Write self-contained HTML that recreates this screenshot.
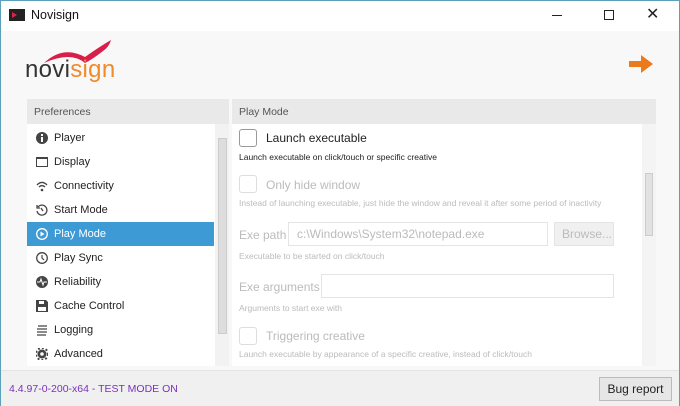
<!DOCTYPE html>
<html><head><style>
*{box-sizing:border-box;margin:0;padding:0}
body{width:680px;height:406px;overflow:hidden;font-family:"Liberation Sans",sans-serif;background:#f8f8f8;position:relative;border:1px solid #5aa0b8}
.abs{position:absolute}
.title{left:0;top:0;width:678px;height:30px;background:#fff}
.nav div.item{position:absolute;left:0;width:187px;height:24px;font-size:11px;color:#222;line-height:24px;padding-left:27px}
.nav svg{position:absolute;left:9px;top:6px}
.sel{background:#3d9ad5;color:#fff!important}
.gray{color:#bbb}
.small{font-size:8.5px}
.cb{width:18px;height:18px;border:1px solid #999;border-radius:3px;background:#fff}
.cb.d{border-color:#ddd}
.inp{border:1px solid #e4e4e4;background:#fff;height:24px}
</style></head><body>
<div class="abs title">
<svg class="abs" style="left:8px;top:8px" width="16" height="12"><rect width="16" height="12" fill="#222"/><path d="M3 3l5 3-5 3z" fill="#e0204a"/></svg>
<div class="abs" style="left:30px;top:7px;font-size:12.5px;color:#111">Novisign</div>
<div class="abs" style="left:551px;top:14px;width:10px;height:1px;background:#222"></div>
<div class="abs" style="left:603px;top:9px;width:10px;height:10px;border:1px solid #222"></div>
<div class="abs" style="left:645px;top:3px;font-size:16px;color:#222">✕</div>
</div>
<svg class="abs" style="left:40px;top:38px" width="72" height="26"><path d="M3 24 Q22 6 44 18 Q58 8 70 1 Q68 8 62 12 Q52 20 44 24 Q30 12 3 24z" fill="#d81e4b"/></svg>
<div class="abs" style="left:24px;top:55px;font-size:24px;letter-spacing:0.3px"><span style="color:#333">novi</span><span style="color:#f08a2a">sign</span></div>
<svg class="abs" style="left:628px;top:54px" width="24" height="18"><path d="M0 6h12V0l12 9-12 9v-6H0z" fill="#ec7a1c"/></svg>
<div class="abs" style="left:26px;top:98px;width:202px;height:25px;background:#e9e9e9;font-size:10.5px;color:#555;line-height:26px;padding-left:7px">Preferences</div>
<div class="abs" style="left:231px;top:98px;width:424px;height:25px;background:#e9e9e9;font-size:10.5px;color:#555;line-height:26px;padding-left:7px">Play Mode</div>
<div class="abs nav" style="left:26px;top:123px;width:202px;height:242px;background:#fff">
<div class="item" style="top:2px"><svg width="12" height="12"><circle cx="6" cy="6" r="6" fill="#444"/><rect x="5" y="5" width="2" height="5" fill="#fff"/><rect x="5" y="2" width="2" height="2" fill="#fff"/></svg>Player</div>
<div class="item" style="top:26px"><svg width="12" height="12"><rect x="0.5" y="1.5" width="11" height="9" fill="none" stroke="#444"/><rect x="0" y="1" width="12" height="2" fill="#444"/></svg>Display</div>
<div class="item" style="top:50px"><svg width="12" height="12"><path d="M1 5Q6 0 11 5M3 7Q6 4 9 7" fill="none" stroke="#444" stroke-width="1.3"/><circle cx="6" cy="10" r="1.3" fill="#444"/></svg>Connectivity</div>
<div class="item" style="top:74px"><svg width="12" height="12"><path d="M2 3A5 5 0 1 1 1 7M1 1v3h3M5 4l2 3" fill="none" stroke="#444" stroke-width="1.3"/></svg>Start Mode</div>
<div class="item sel" style="top:98px"><svg width="12" height="12"><circle cx="6" cy="6" r="5.3" fill="none" stroke="#fff" stroke-width="1.3"/><path d="M4.5 3.5l4 2.5-4 2.5z" fill="#fff"/></svg>Play Mode</div>
<div class="item" style="top:122px"><svg width="12" height="12"><circle cx="6" cy="6" r="5.3" fill="none" stroke="#444" stroke-width="1.3"/><path d="M6 3v3l2 2" fill="none" stroke="#444" stroke-width="1.2"/></svg>Play Sync</div>
<div class="item" style="top:146px"><svg width="12" height="12"><circle cx="6" cy="6" r="6" fill="#444"/><path d="M1 6h3l1-3 2 6 1-3h3" fill="none" stroke="#fff"/></svg>Reliability</div>
<div class="item" style="top:170px"><svg width="12" height="12"><path d="M0 0h10l2 2v10H0z" fill="#444"/><rect x="3" y="1" width="5" height="3" fill="#fff"/><rect x="2" y="7" width="8" height="4" fill="#fff"/></svg>Cache Control</div>
<div class="item" style="top:194px"><svg width="12" height="12"><path d="M2 2h9M1 5h10M1 8h10M1 11h9" stroke="#444" stroke-width="1.3"/></svg>Logging</div>
<div class="item" style="top:218px"><svg width="12" height="12"><circle cx="6" cy="6" r="4.5" fill="#444"/><circle cx="6" cy="6" r="6" fill="none" stroke="#444" stroke-width="2" stroke-dasharray="2 2"/><circle cx="6" cy="6" r="1.8" fill="#fff"/></svg>Advanced</div>
<div class="abs" style="left:188px;top:0;width:14px;height:242px;background:#f2f2f2"></div>
<div class="abs" style="left:191px;top:14px;width:9px;height:196px;background:#ddd;border:1px solid #ccc"></div>
</div>
<div class="abs" style="left:231px;top:123px;width:424px;height:242px;background:#fff;overflow:hidden">
<div class="abs cb" style="left:7px;top:5px"></div>
<div class="abs" style="left:34px;top:7px;font-size:12px;color:#222">Launch executable</div>
<div class="abs small" style="left:7px;top:28px;color:#222">Launch executable on click/touch or specific creative</div>
<div class="abs cb d" style="left:7px;top:51px"></div>
<div class="abs gray" style="left:34px;top:54px;font-size:12px">Only hide window</div>
<div class="abs small gray" style="left:7px;top:74px">Instead of launching executable, just hide the window and reveal it after some period of inactivity</div>
<div class="abs gray" style="left:7px;top:104px;font-size:12px">Exe path</div>
<div class="abs inp gray" style="left:56px;top:98px;width:260px;font-size:12px;padding:4px 8px">c:\Windows\System32\notepad.exe</div>
<div class="abs gray" style="left:322px;top:98px;width:60px;height:24px;background:#f0f0f0;border:1px solid #e4e4e4;font-size:12px;padding:4px 7px">Browse...</div>
<div class="abs small gray" style="left:7px;top:127px">Executable to be started on click/touch</div>
<div class="abs gray" style="left:7px;top:156px;font-size:12px">Exe arguments</div>
<div class="abs inp" style="left:89px;top:150px;width:293px"></div>
<div class="abs small gray" style="left:7px;top:179px">Arguments to start exe with</div>
<div class="abs cb d" style="left:7px;top:203px"></div>
<div class="abs gray" style="left:34px;top:205px;font-size:12px">Triggering creative</div>
<div class="abs small gray" style="left:7px;top:225px">Launch executable by appearance of a specific creative, instead of click/touch</div>
<div class="abs" style="left:410px;top:0;width:14px;height:242px;background:#f4f4f4"></div>
<div class="abs" style="left:413px;top:49px;width:8px;height:63px;background:#e2e2e2;border:1px solid #ccc"></div>
</div>
<div class="abs" style="left:0;top:369px;width:678px;height:36px;background:#f0f0f0;border-top:1px solid #e4e4e4"></div>
<div class="abs" style="left:8px;top:382px;font-size:10.5px;color:#7b2fbe">4.4.97-0-200-x64 - TEST MODE ON</div>
<div class="abs" style="left:598px;top:376px;width:73px;height:24px;background:#e6e6e6;border:1px solid #bbb;font-size:12px;color:#222;text-align:center;line-height:22px">Bug report</div>
</body></html>
